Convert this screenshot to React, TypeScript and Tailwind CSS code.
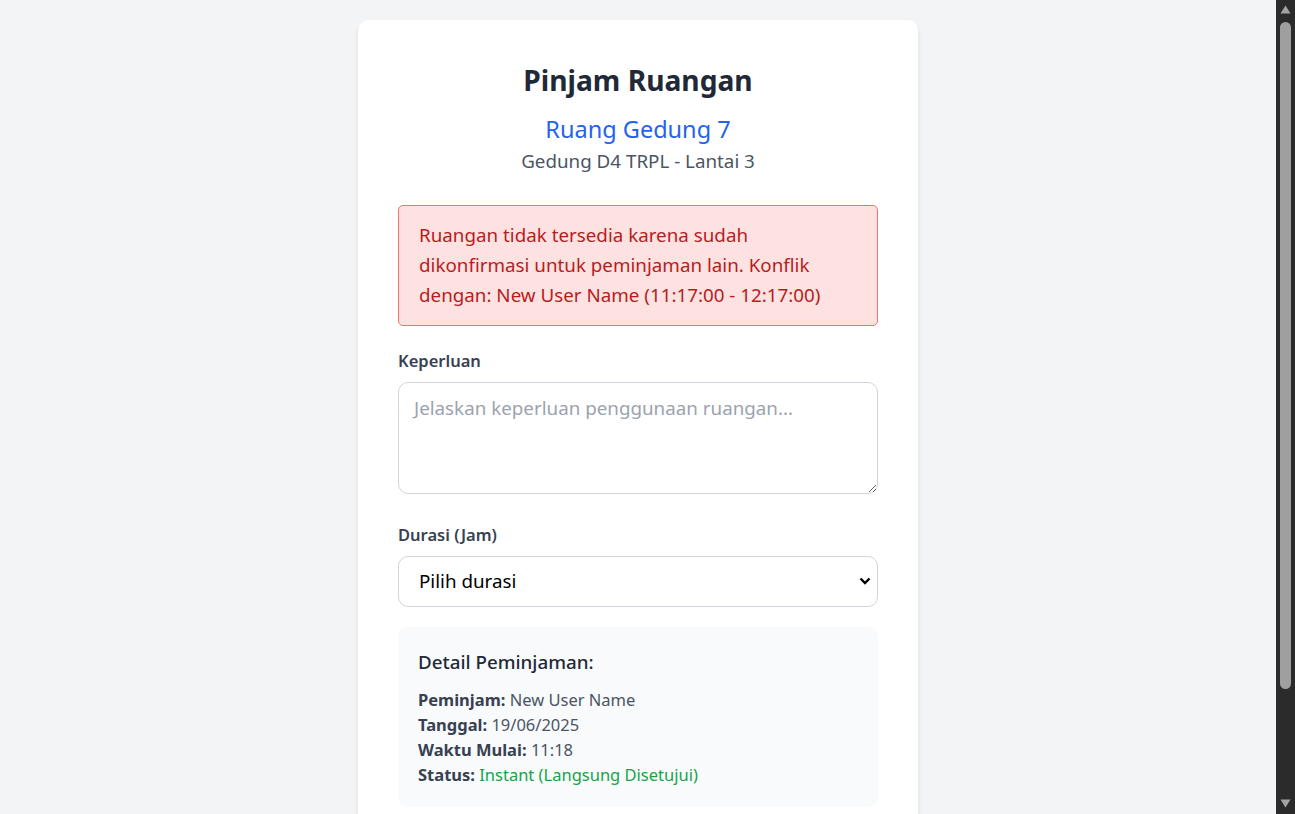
import { useState } from 'react';

const font = { fontFamily: '"Noto Sans", "Open Sans", sans-serif' };

function ScrollbarStrip() {
  return (
    <div className="flex h-screen w-[19px] shrink-0 flex-col items-center bg-[#2b2b2b] pt-[5px] pb-[6px]">
      <svg width="11" height="9" viewBox="0 0 11 9" className="shrink-0">
        <path d="M5.5 0.5 L10.5 8.5 L0.5 8.5 Z" fill="#a3a3a3" />
      </svg>
      <div className="mt-[8px] h-[667px] w-[11px] shrink-0 rounded-full bg-[#9f9f9f]" />
      <div className="flex-1" />
      <svg width="11" height="9" viewBox="0 0 11 9" className="shrink-0">
        <path d="M0.5 0.5 L10.5 0.5 L5.5 8.5 Z" fill="#a3a3a3" />
      </svg>
    </div>
  );
}

export default function App() {
  const [purpose, setPurpose] = useState('');
  const [duration, setDuration] = useState('');

  return (
    <div className="flex h-screen" style={font}>
      <div className="h-screen flex-1 overflow-y-auto bg-[#f3f4f6] [scrollbar-width:none]">
        <div className="mx-auto my-[20px] w-[560px] rounded-[10px] bg-white p-[40px] shadow-md">
          <div className="mb-[29px] text-center">
            <h1 className="mb-[11.5px] text-[28.2px] leading-[40px] font-bold text-[#1f2937]">
              Pinjam Ruangan
            </h1>
            <p className="text-[23.5px] leading-[35px] text-[#2563eb]">
              Ruang Gedung 7
            </p>
            <p className="-mt-px text-[18.8px] leading-[30px] text-[#4b5563]">
              Gedung D4 TRPL - Lantai 3
            </p>
          </div>

          <div className="mb-[22px] rounded-[5px] border border-[#f87171] bg-[#fee2e2] py-[14.5px] pr-[40px] pl-[20px] text-[18.8px] leading-[30px] text-[#b91c1c]">
            Ruangan tidak tersedia karena sudah dikonfirmasi untuk peminjaman
            lain. Konflik dengan: New User Name (11:17:00 - 12:17:00)
          </div>

          <label className="mb-[9px] block text-[16.5px] leading-[25px] font-semibold text-[#374151]">
            Keperluan
          </label>
          <textarea
            rows={3}
            value={purpose}
            onChange={(e) => setPurpose(e.target.value)}
            placeholder="Jelaskan keperluan penggunaan ruangan..."
            className="mb-[28px] block h-[112px] w-full rounded-[10px] border border-[#d1d5db] px-[15px] py-[10px] text-[18.8px] leading-[30px] text-[#1f2937] placeholder:text-[#9ca3af] focus:outline-none"
          />

          <label className="mb-[9px] block text-[16.5px] leading-[25px] font-semibold text-[#374151]">
            Durasi (Jam)
          </label>
          <div className="relative mb-[20px]">
            <select
              value={duration}
              onChange={(e) => setDuration(e.target.value)}
              className="block h-[51px] w-full appearance-none rounded-[10px] border border-[#d1d5db] bg-white pr-[40px] pl-[20px] text-[18.8px] text-black focus:outline-none"
            >
              <option value="">Pilih durasi</option>
              <option value="1">1 Jam</option>
              <option value="2">2 Jam</option>
              <option value="3">3 Jam</option>
            </select>
            <svg
              width="12"
              height="8"
              viewBox="0 0 12 8"
              className="pointer-events-none absolute top-[21px] right-[7px]"
            >
              <path
                d="M1.5 1.5 L6 6 L10.5 1.5"
                fill="none"
                stroke="#000"
                strokeWidth="2.4"
              />
            </svg>
          </div>

          <div className="mb-[20px] rounded-[10px] bg-[#f9fafb] p-[20px]">
            <h3 className="mb-[10px] text-[18.8px] leading-[30px] font-medium text-[#1f2937]">
              Detail Peminjaman:
            </h3>
            <div className="text-[16.5px] leading-[25px] text-[#4b5563]">
              <p>
                <strong className="font-bold text-[#374151]">Peminjam:</strong>{' '}
                New User Name
              </p>
              <p>
                <strong className="font-bold text-[#374151]">Tanggal:</strong>{' '}
                19/06/2025
              </p>
              <p>
                <strong className="font-bold text-[#374151]">Waktu Mulai:</strong>{' '}
                11:18
              </p>
              <p>
                <strong className="font-bold text-[#374151]">Status:</strong>{' '}
                <span className="text-[#16a34a]">Instant (Langsung Disetujui)</span>
              </p>
            </div>
          </div>

          <div className="flex gap-[15px]">
            <button className="h-[59px] flex-1 rounded-[10px] bg-[#e5e7eb] text-[18.8px] font-medium text-[#374151]">
              Batal
            </button>
            <button className="h-[59px] flex-1 rounded-[10px] bg-[#2563eb] text-[18.8px] font-medium text-white">
              Pinjam Ruangan
            </button>
          </div>
        </div>
      </div>
      <ScrollbarStrip />
    </div>
  );
}
